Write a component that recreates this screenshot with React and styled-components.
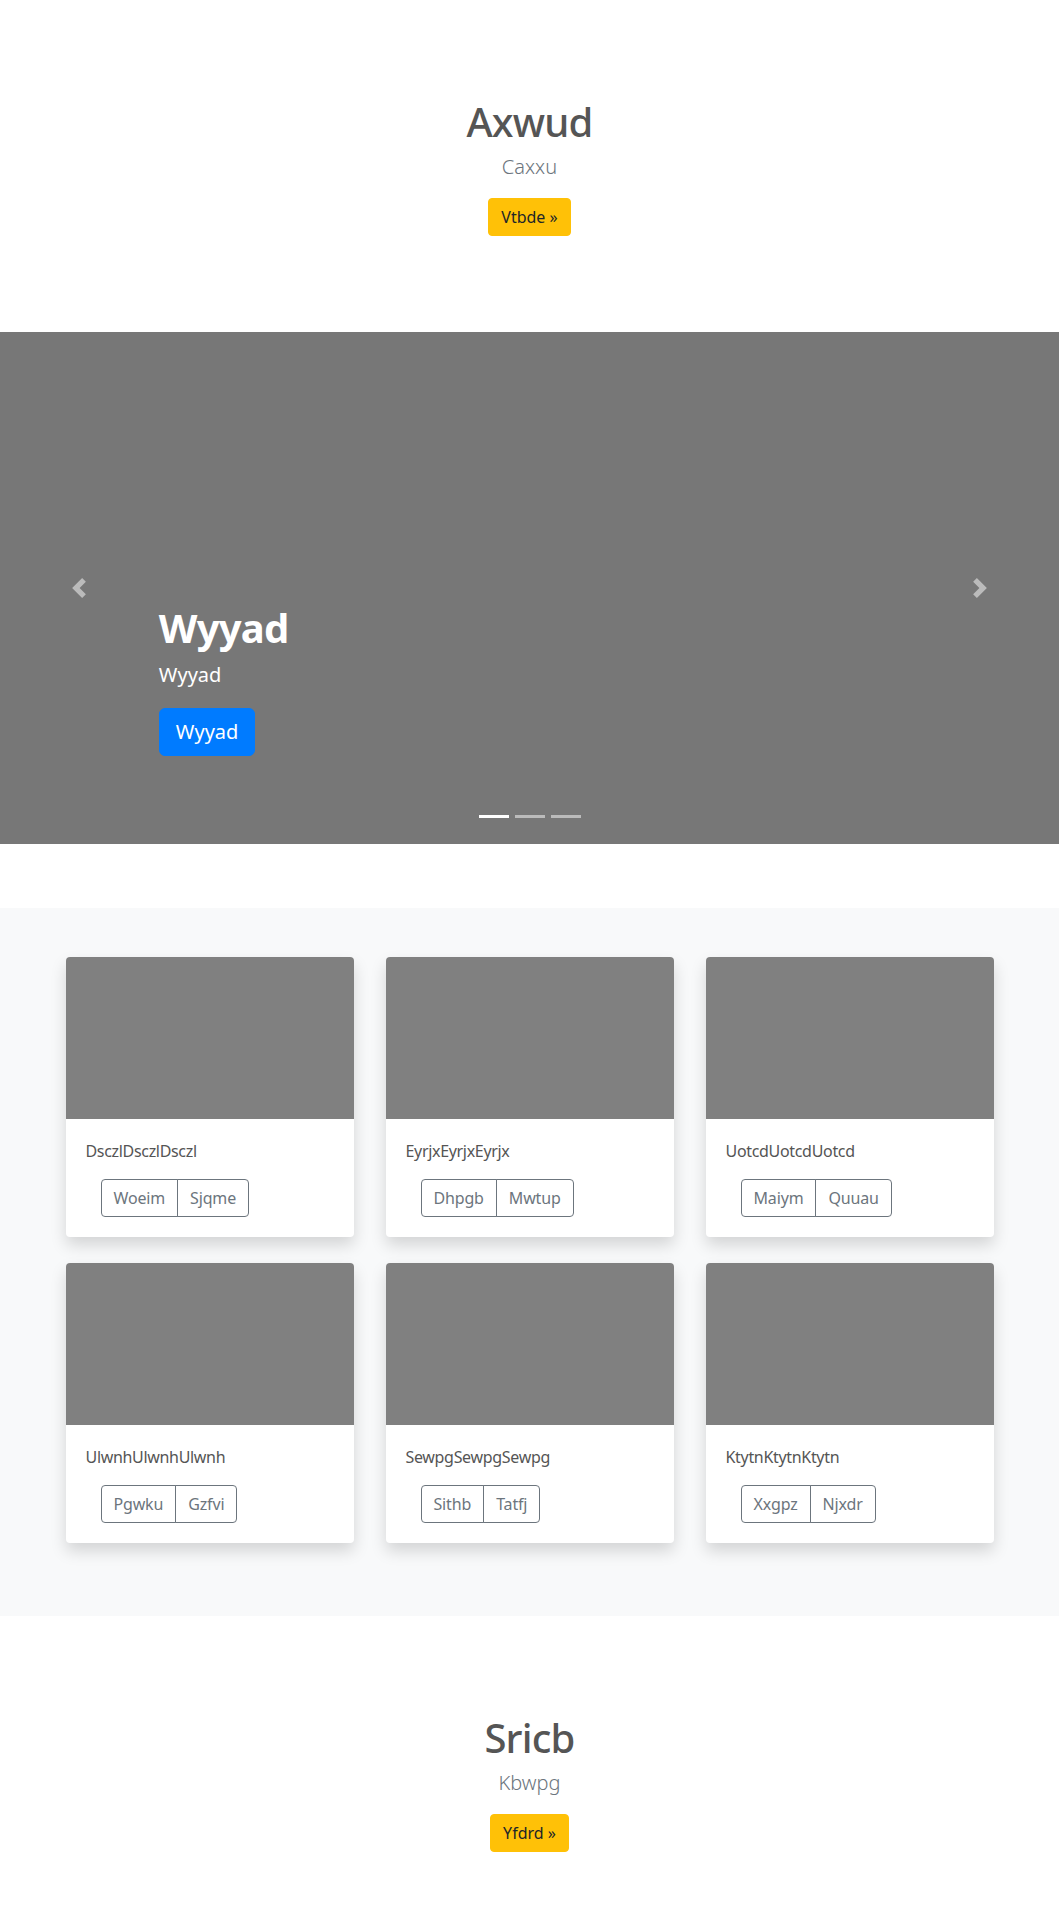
import React from 'react';
import styled, { createGlobalStyle } from 'styled-components';

const GlobalStyle = createGlobalStyle`
  body {
    margin: 0;
    font-family: "Noto Sans", "Open Sans", sans-serif;
    font-size: 16px;
    line-height: 1.5;
    color: #212529;
    background: #fff;
  }
  * { box-sizing: border-box; }
`;

const Hero = styled.section`
  padding: 98px 0 96px;
  text-align: center;
`;

const HeroTitle = styled.h1`
  margin: 0 0 6px;
  font-size: 40px;
  font-weight: 500;
  line-height: 1.2;
  letter-spacing: -0.02em;
  color: #555;
`;

const Lead = styled.p`
  margin: 0 0 16px;
  font-size: 20px;
  font-weight: 300;
  color: #6c757d;
`;

const Btn = styled.a`
  display: inline-block;
  padding: ${p => (p.$lg ? '8px 16px' : '6px 12px')};
  font-size: ${p => (p.$lg ? '20px' : '16px')};
  line-height: 1.5;
  border: 1px solid transparent;
  border-radius: ${p => (p.$lg ? '6px' : '4px')};
  text-decoration: none;
  cursor: pointer;
  color: ${p => (p.$variant === 'primary' ? '#fff' : '#212529')};
  background: ${p => (p.$variant === 'primary' ? '#007bff' : '#ffc107')};
  border-color: ${p => (p.$variant === 'primary' ? '#007bff' : '#ffc107')};
`;

const Carousel = styled.div`
  position: relative;
  height: 512px;
  background: #777;
  display: flex;
  align-items: flex-end;
  padding: 0 15% 88px;
`;

const Caption = styled.div`
  color: #fff;
  text-align: left;
`;

const CaptionTitle = styled.h1`
  margin: 0;
  font-size: 40px;
  font-weight: 700;
  line-height: 64px;
  letter-spacing: -0.02em;
`;

const CaptionText = styled.p`
  margin: 0 0 18px;
  font-size: 20px;
`;

const Control = styled.a`
  position: absolute;
  top: 0;
  bottom: 0;
  ${p => (p.$side === 'prev' ? 'left: 0;' : 'right: 0;')}
  width: 15%;
  display: flex;
  align-items: center;
  justify-content: center;
  opacity: 0.5;
  cursor: pointer;
`;

const Indicators = styled.ol`
  position: absolute;
  left: 0;
  right: 0;
  bottom: 26px;
  margin: 0;
  padding: 0;
  list-style: none;
  display: flex;
  justify-content: center;
  gap: 6px;
`;

const Indicator = styled.li`
  width: 30px;
  height: 3px;
  background: #fff;
  opacity: ${p => (p.$active ? 1 : 0.5)};
`;

const Album = styled.section`
  margin-top: 64px;
  background: #f8f9fa;
  padding: 49px 0 73px;
`;

const Container = styled.div`
  max-width: 960px;
  margin: 0 auto;
  padding: 0 16px;
`;

const Grid = styled.div`
  display: grid;
  grid-template-columns: repeat(3, 1fr);
  column-gap: 32px;
  row-gap: 26px;
`;

const Card = styled.div`
  background: #fff;
  border-radius: 4px;
  overflow: hidden;
  box-shadow: 0 8px 16px rgba(0, 0, 0, 0.15);
`;

const Thumb = styled.div`
  height: 162px;
  background: #808080;
`;

const CardBody = styled.div`
  padding: 20px;
`;

const CardText = styled.p`
  margin: 0 0 16px;
  font-size: 16px;
  letter-spacing: -0.02em;
  color: #555;
`;

const BtnGroup = styled.div`
  display: inline-flex;
  margin-left: 15px;
`;

const OutlineBtn = styled.button`
  font-family: inherit;
  font-size: 16px;
  line-height: 1.5;
  padding: 6px 12px;
  letter-spacing: -0.01em;
  background: transparent;
  color: #6c757d;
  border: 1px solid #6c757d;
  border-radius: 0;
  &:first-child {
    border-radius: 4px 0 0 4px;
  }
  &:last-child {
    border-radius: 0 4px 4px 0;
    margin-left: -1px;
  }
`;

const Chevron = ({ dir }) => (
  <svg width="20" height="20" viewBox="0 0 8 8" fill="#fff">
    {dir === 'prev' ? (
      <path d="M5.25 0l-4 4 4 4 1.5-1.5L4.25 4l2.5-2.5L5.25 0z" />
    ) : (
      <path d="M2.75 0l-1.5 1.5L3.75 4l-2.5 2.5L2.75 8l4-4-4-4z" />
    )}
  </svg>
);

const cards = [
  { text: 'DsczlDsczlDsczl', buttons: ['Woeim', 'Sjqme'] },
  { text: 'EyrjxEyrjxEyrjx', buttons: ['Dhpgb', 'Mwtup'] },
  { text: 'UotcdUotcdUotcd', buttons: ['Maiym', 'Quuau'] },
  { text: 'UlwnhUlwnhUlwnh', buttons: ['Pgwku', 'Gzfvi'] },
  { text: 'SewpgSewpgSewpg', buttons: ['Sithb', 'Tatfj'] },
  { text: 'KtytnKtytnKtytn', buttons: ['Xxgpz', 'Njxdr'] },
];

export default function App() {
  return (
    <>
      <GlobalStyle />
      <Hero>
        <HeroTitle>Axwud</HeroTitle>
        <Lead>Caxxu</Lead>
        <Btn $variant="warning">Vtbde »</Btn>
      </Hero>

      <Carousel>
        <Indicators>
          <Indicator $active />
          <Indicator />
          <Indicator />
        </Indicators>
        <Caption>
          <CaptionTitle>Wyyad</CaptionTitle>
          <CaptionText>Wyyad</CaptionText>
          <Btn $variant="primary" $lg>Wyyad</Btn>
        </Caption>
        <Control $side="prev"><Chevron dir="prev" /></Control>
        <Control $side="next"><Chevron dir="next" /></Control>
      </Carousel>

      <Album>
        <Container>
          <Grid>
            {cards.map(c => (
              <Card key={c.text}>
                <Thumb />
                <CardBody>
                  <CardText>{c.text}</CardText>
                  <BtnGroup>
                    {c.buttons.map(b => (
                      <OutlineBtn key={b} type="button">{b}</OutlineBtn>
                    ))}
                  </BtnGroup>
                </CardBody>
              </Card>
            ))}
          </Grid>
        </Container>
      </Album>

      <Hero>
        <HeroTitle>Sricb</HeroTitle>
        <Lead>Kbwpg</Lead>
        <Btn $variant="warning">Yfdrd »</Btn>
      </Hero>
    </>
  );
}
